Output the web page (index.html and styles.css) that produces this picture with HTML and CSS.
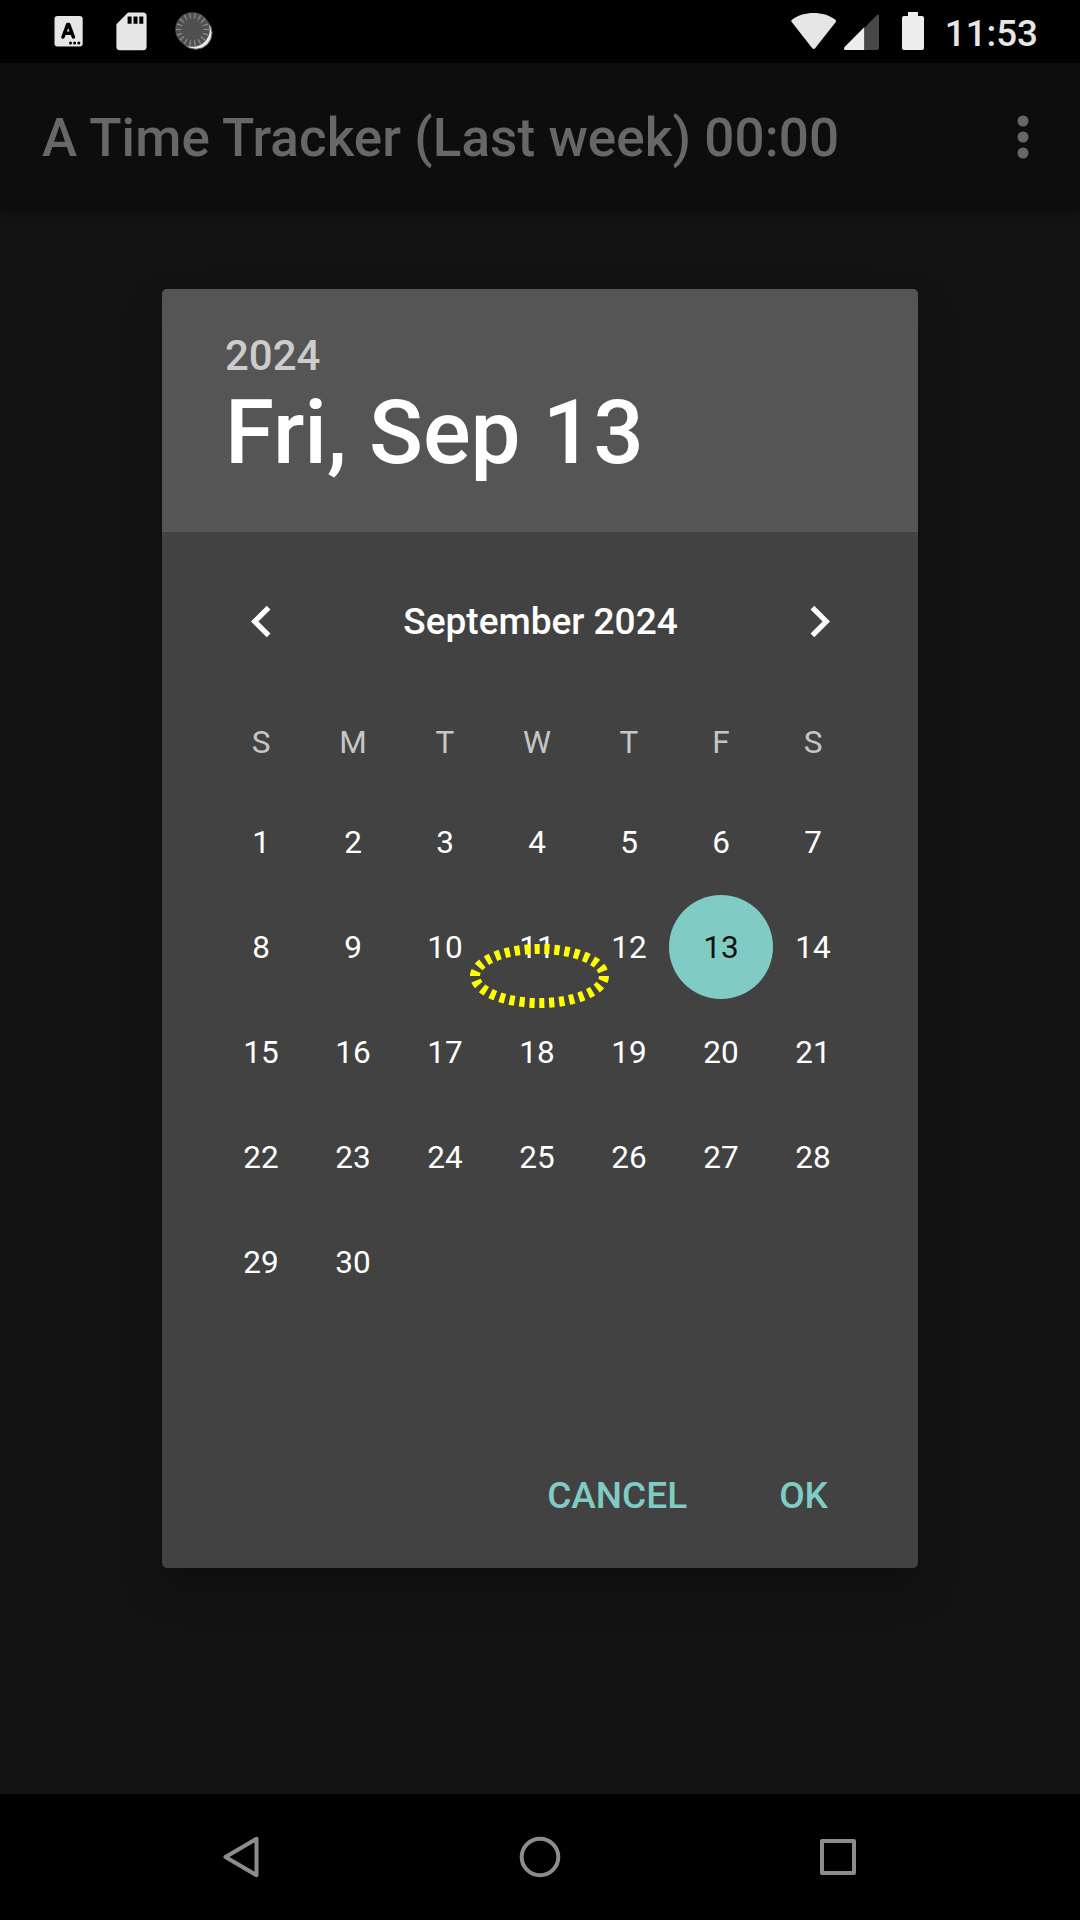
FILE: index.html
```html
<!DOCTYPE html>
<html lang="en">
<head>
<meta charset="utf-8">
<title>A Time Tracker</title>
<link rel="stylesheet" href="styles.css">
</head>
<body>
<div class="screen">
  <header class="status">
    <div class="notifications">
      <svg width="30" height="32" viewBox="0 0 30 32"><rect x="0.5" y="1" width="28.2" height="30.5" rx="3" fill="#e6e6e6"/><path d="M9 22 L13.7 9.4 h1 L19.4 22 M10.8 18.3 h6.8" fill="none" stroke="#000" stroke-width="3.5" stroke-linecap="round" stroke-linejoin="round"/><g fill="#000"><circle cx="16.5" cy="28" r="1.5"/><circle cx="20.6" cy="28" r="1.5"/><circle cx="24.8" cy="28" r="1.5"/></g></svg>
      <svg width="31" height="39" viewBox="0 0 31 39"><path d="M12 .5 H27 a3.6 3.6 0 0 1 3.6 3.6 V34.7 a3.6 3.6 0 0 1-3.6 3.6 H4 A3.6 3.6 0 0 1 .4 34.7 V12.2 z" fill="#e6e6e6"/><path d="M11.6 4.4h4v7.4h-4z M17.5 4.4h4v7.4h-4z M23.3 4.4h4v7.4h-4z" fill="#000"/></svg>
      <svg width="38" height="38" viewBox="0 0 38 38"><circle cx="20.8" cy="21" r="16.3" fill="#e8e8e8" stroke="#555" stroke-width="1"/><circle cx="17.5" cy="17.5" r="17.3" fill="#505050"/><circle class="ticks" cx="17.5" cy="17.5" r="13.7" pathLength="180"/></svg>
    </div>
    <div class="system">
      <svg width="46" height="38" viewBox="0 0 46 38"><path d="M.9 10.2 C-.1 9.4 0 8.500 1 7.700 C7.300 3 14.500 1 22.700 1 S38 3 44.300 7.700 C45.300 8.500 45.400 9.400 44.600 10.300 L24.300 36 Q22.700 38 21.100 36 z" fill="#e6e6e6"/></svg>
      <svg width="36" height="36" viewBox="0 0 36 36"><path d="M20.200 14 L33 1.100 Q35 -.2 35 2 V34 Q35 36 33 36 H20.200z" fill="#484848"/><path d="M20.200 13.200 V36 H1.500 Q-1 35.500 .6 33z" fill="#ededed"/></svg>
      <svg class="battery" width="22" height="38" viewBox="0 0 22 38"><path d="M6 0h10v4h4q2 0 2 2v30q0 2-2 2h-18q-2 0-2-2v-30q0-2 2-2h4z" fill="#ededed"/></svg>
      <span class="clock">11:53</span>
    </div>
  </header>

  <div class="appbar">
    <h1 class="title">A Time Tracker (Last week) 00:00</h1>
    <svg width="12" height="44" viewBox="0 0 12 44" fill="#676767"><circle cx="6" cy="6" r="5.500"/><circle cx="6" cy="22" r="5.500"/><circle cx="6" cy="38" r="5.500"/></svg>
  </div>

  <main class="content">
    <section class="dialog">
      <div class="dialog-head">
        <div class="year">2024</div>
        <div class="date">Fri, Sep 13</div>
      </div>
      <div class="month-bar">
        <svg width="63" height="63" viewBox="0 0 24 24"><path d="M15.410 7.410 14 6l-6 6 6 6 1.410-1.410L10.830 12z" fill="#fff"/></svg>
        <span class="month">September 2024</span>
        <svg width="63" height="63" viewBox="0 0 24 24"><path d="M10 6 8.590 7.410 13.170 12l-4.580 4.590L10 18l6-6z" fill="#fff"/></svg>
      </div>
      <div class="weekdays"><span>S</span><span>M</span><span>T</span><span>W</span><span>T</span><span>F</span><span>S</span></div>
      <div class="days">
        <span>1</span><span>2</span><span>3</span><span>4</span><span>5</span><span>6</span><span>7</span>
        <span>8</span><span>9</span><span>10</span><span>11</span><span>12</span><span class="selected">13</span><span>14</span>
        <span>15</span><span>16</span><span>17</span><span>18</span><span>19</span><span>20</span><span>21</span>
        <span>22</span><span>23</span><span>24</span><span>25</span><span>26</span><span>27</span><span>28</span>
        <span>29</span><span>30</span>
      </div>
      <div class="actions"><span>CANCEL</span><span>OK</span></div>
      <svg class="marker" width="140" height="66" viewBox="0 0 140 66"><ellipse cx="69.500" cy="33" rx="64.500" ry="27" pathLength="300" fill="none" stroke="#ff0" stroke-width="10" stroke-dasharray="5.200 4.800"/></svg>
    </section>
  </main>

  <nav class="navbar">
    <svg width="42" height="42" viewBox="0 0 42 42"><path d="M35.500 2.800 V39.200 L4.500 21z"/></svg>
    <svg width="42" height="42" viewBox="0 0 42 42"><circle cx="21" cy="21" r="18.300"/></svg>
    <svg width="42" height="42" viewBox="0 0 42 42"><rect x="5" y="5" width="32" height="32"/></svg>
  </nav>
</div>
</body>
</html>
```
FILE: styles.css
```css
* { box-sizing: border-box; }
body { margin: 0; background: #000; font-family: Roboto, "Liberation Sans", sans-serif; }
svg { display: block; flex: none; }
.screen { width: 1080px; height: 1920px; display: flex; flex-direction: column; background: #131313; }

.status { height: 63px; flex: none; background: #000; display: flex; justify-content: space-between; align-items: flex-start; padding: 12px 42px 0 54px; }
.notifications { display: flex; gap: 32px; }
.notifications svg:first-child { margin-top: 3px; }
.notifications svg:last-child { margin-left: -4px; }
.ticks { fill: none; stroke: #888; stroke-width: 5.500; stroke-dasharray: 2.800 7.200; stroke-dashoffset: 1.400; }
.system { display: flex; gap: 7px; color: #e6e6e6; }
.system svg:nth-child(2) { margin-top: 2px; }
.battery { margin: 0 14px 0 15px; }
.clock { font-size: 36.750px; font-weight: 500; line-height: 44px; }

.appbar { height: 147px; flex: none; background: #0d0d0d; box-shadow: 0 2px 8px #0d0d0d; display: flex; justify-content: space-between; align-items: center; padding: 0 51px 0 42px; }
.title { margin: 0; padding-top: 3px; font-size: 53px; font-weight: 500; letter-spacing: .07px; color: #676767; white-space: nowrap; }

.content { flex: 1; display: flex; justify-content: center; align-items: flex-start; padding-top: 79px; }
.dialog { position: relative; width: 756px; height: 1279px; border-radius: 5px; background: #424242; color: #fff; box-shadow: 0 20px 40px rgba(0, 0, 0, .25); display: flex; flex-direction: column; }
.dialog-head { height: 243px; flex: none; padding: 42px 63px; background: #555; border-radius: 5px 5px 0 0; }
.year { font-size: 42px; line-height: 49px; font-weight: 500; color: #ccc; }
.date { font-size: 89px; line-height: 105px; font-weight: 500; }
.month-bar { display: flex; justify-content: space-between; align-items: center; height: 63px; margin: 58px 67px 0 68px; }
.month { font-size: 37px; font-weight: 500; }
.weekdays, .days { display: grid; grid-template-columns: repeat(7, 92px); margin-left: 53px; font-size: 31.500px; text-align: center; }
.weekdays { height: 100px; margin-top: 37px; line-height: 105px; color: #c6c6c6; }
.days { grid-auto-rows: 105px; line-height: 105px; height: 630px; }
.selected { width: 104px; height: 104px; line-height: 105px; margin-left: -6px; border-radius: 50%; background: #80cbc4; color: #111; }
.actions { display: flex; justify-content: flex-end; gap: 92px; padding-right: 90px; margin-top: 55px; font-size: 37px; line-height: 42px; font-weight: 500; color: #80cbc4; }
.marker { position: absolute; left: 308px; top: 654px; }

.navbar { height: 126px; flex: none; background: #000; display: flex; justify-content: space-between; align-items: center; padding: 0 221px; fill: none; stroke: #8c8c8c; stroke-width: 4; stroke-linejoin: round; }
```
